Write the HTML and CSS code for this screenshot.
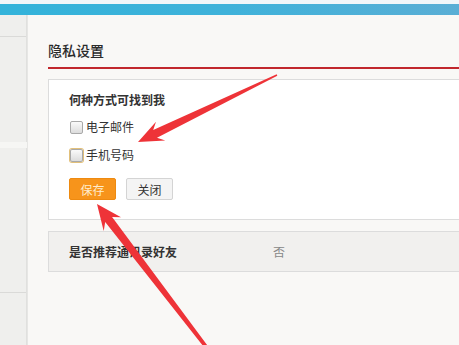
FILE: index.html
```html
<!DOCTYPE html>
<html lang="zh-CN">
<head>
  <meta charset="UTF-8" />
  <title>隐私设置</title>
  <link rel="stylesheet" href="styles.css">
</head>
<body>
  <div class="topbar"></div>
  <div class="layout">
    <aside class="side">
      <div class="side-panel first"><div class="side-line"></div></div>
      <div class="side-panel second"><div class="side-line"></div></div>
    </aside>

    <main class="content">
      <h2 class="title">隐私设置</h2>

      <div class="card">
        <div class="card-title">何种方式可找到我</div>
        <label class="option">
          <span class="cb"></span>电子邮件
        </label>
        <label class="option">
          <span class="cb hover"></span>手机号码
        </label>
        <div class="actions">
          <button class="btn btn-save">保存</button>
          <button class="btn btn-close">关闭</button>
        </div>
      </div>

      <div class="row">
        <span class="row-label">是否推荐通讯录好友</span>
        <span class="row-value">否</span>
      </div>
    </main>
  </div>

  <svg class="marks" width="459" height="345" viewBox="0 0 459 345">
    <polygon fill="#ee3338" points="277.3,75.7 157,137.8 165.3,140.5 138,142 156,121.8 153.2,129.9 276.7,74.3"/>
    <polygon fill="#ee3338" points="209.6,348.4 112.1,216.9 121,217.2 97,204 103.7,231 105.2,221.9 206.4,350.2"/>
  </svg>
</body>
</html>
```

FILE: styles.css
```css
body {
  margin: 0;
  position: relative;
  overflow: hidden;
  height: 345px;
  font-family: "Microsoft YaHei", "Noto Sans CJK SC", sans-serif;
  font-size: 12px;
  color: #333;
  background: #f9f8f6;
}

.topbar {
  height: 11px;
  border-top: 4px solid #f1f6f9;
  background: linear-gradient(to right, #33b3da, #3fb2da 50%, #5aaed5);
}

.layout {
  display: flex;
}

.side {
  width: 27px;
  border-right: 1px solid #e6e6e4;
  background: #f6f6f4;
  flex-shrink: 0;
}

.side-panel {
  background: #efefed;
  border-right: 1px solid #e0e0de;
}

.side-panel.first {
  height: 127px;
  padding-top: 21px;
  box-sizing: border-box;
}

.side-panel.second {
  margin-top: 6px;
  height: 200px;
  padding-top: 144px;
  box-sizing: border-box;
}

.side-line {
  height: 1px;
  background: #dadad8;
}

.content {
  flex: 1;
  padding-left: 20px;
  margin-right: -10px;
}

.title {
  margin: 25px 0 0;
  padding-bottom: 7px;
  border-bottom: 2px solid #c1272d;
  font-size: 14px;
  font-weight: 500;
  line-height: 20px;
  color: #2b2b2b;
}

.card {
  margin-top: 10px;
  background: #fff;
  border: 1px solid #dcdcdc;
  padding: 12px 20px 19px;
}

.card-title {
  font-weight: bold;
  line-height: 16px;
}

.option {
  display: flex;
  align-items: center;
  line-height: 16px;
  margin-top: 11px;
  color: #333;
}

.option + .option {
  margin-top: 12px;
}

.cb {
  width: 11px;
  height: 11px;
  margin: 0 3px 0 1px;
  border: 1px solid #a9a9a9;
  border-radius: 2px;
  background: linear-gradient(#fafafa, #dcdcdc);
}

.cb.hover {
  box-shadow: 0 0 0 1px #e2c07a;
}

.actions {
  display: flex;
  gap: 10px;
  margin-top: 15px;
}

.btn {
  width: 47px;
  height: 22px;
  padding: 0;
  border-radius: 2px;
  font-family: inherit;
  font-size: 12px;
}

.btn-save {
  background: #f7941b;
  border: 1px solid #ee8a10;
  color: #ffeccc;
}

.btn-close {
  background: #f4f4f4;
  border: 1px solid #d4d4d4;
  color: #333;
}

.row {
  margin-top: 11px;
  height: 39px;
  line-height: 39px;
  padding: 0 20px;
  background: #f1f0ee;
  border: 1px solid #dcdcdc;
  display: flex;
}

.row-label {
  width: 204px;
  font-weight: bold;
}

.row-value {
  color: #888;
}

.marks {
  position: absolute;
  top: 0;
  left: 0;
  pointer-events: none;
}
```
